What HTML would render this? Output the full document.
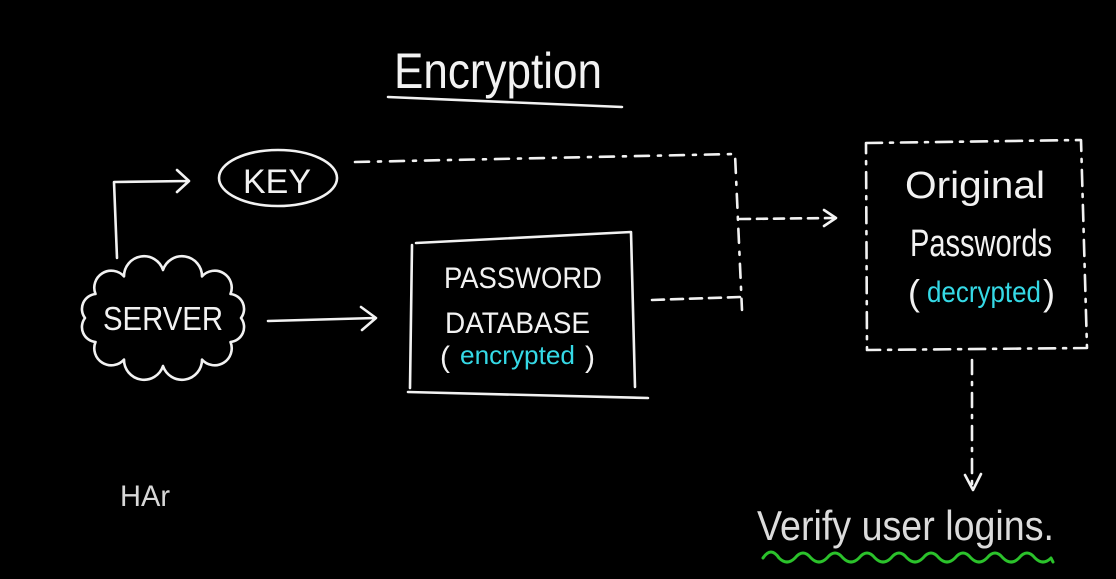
<!DOCTYPE html>
<html><head><meta charset="utf-8"><style>
html,body{margin:0;padding:0;background:#000;width:1116px;height:579px;overflow:hidden}
svg{display:block}
text{font-family:"Liberation Sans",sans-serif;fill:#f2f2f2}
</style></head><body>
<svg width="1116" height="579" viewBox="0 0 1116 579" fill="none" stroke="#f2f2f2" stroke-width="2.6" stroke-linecap="round" stroke-linejoin="round">
<text x="394" y="88" font-size="50" stroke="none" textLength="208" lengthAdjust="spacingAndGlyphs">Encryption</text>
<path d="M388 97 L622 107"/>
<ellipse cx="278" cy="178" rx="59" ry="28"/>
<text x="243" y="193" font-size="34" stroke="none" textLength="68" lengthAdjust="spacingAndGlyphs">KEY</text>
<path d="M117 258 L114 182 L188 181 M177 170 L189 181 L177 192"/>
<path d="M355 162 L735 154 L742 310" stroke-dasharray="14 9 3 9"/>
<path d="M652 300 L740 297" stroke-dasharray="12 7"/>
<path d="M740 219 L834 218" stroke-dasharray="10 7"/>
<path d="M824 210 L836 218 L824 226"/>
<path d="M241 318 A15 15 0 0 1 230.5 342 A17 17 0 0 1 202 359.6 A20 20 0 0 1 163 366 A20 20 0 0 1 124 359.6 A17 17 0 0 1 95.5 342 A15 15 0 0 1 85 318 A15 15 0 0 1 95.5 294 A17 17 0 0 1 124 276.4 A20 20 0 0 1 163 270 A20 20 0 0 1 202 276.4 A17 17 0 0 1 230.5 294 A15 15 0 0 1 241 318 Z"/>
<text x="103" y="330" font-size="33" stroke="none" textLength="120" lengthAdjust="spacingAndGlyphs">SERVER</text>
<path d="M268 321 L375 318 M361 307 L376 318 L362 330"/>
<path d="M410 388 L412 245 M416 243 L631 232 L635 387 M408 392 L648 398"/>
<text x="444" y="288" font-size="30" stroke="none" textLength="158" lengthAdjust="spacingAndGlyphs">PASSWORD</text>
<text x="445" y="333" font-size="30" stroke="none" textLength="145" lengthAdjust="spacingAndGlyphs">DATABASE</text>
<text x="440" y="367" font-size="30" stroke="none">(</text>
<text x="460" y="364" font-size="26" stroke="none" style="fill:#35d9e6" textLength="115" lengthAdjust="spacingAndGlyphs">encrypted</text>
<text x="585" y="367" font-size="30" stroke="none">)</text>
<path d="M866 143 L1081 140 L1087 348 L867 350 Z" stroke-dasharray="16 8 3 8"/>
<text x="905" y="198" font-size="38" stroke="none" textLength="140" lengthAdjust="spacingAndGlyphs">Original</text>
<text x="910" y="256" font-size="38" stroke="none" textLength="142" lengthAdjust="spacingAndGlyphs">Passwords</text>
<text x="908" y="305" font-size="36" stroke="none">(</text>
<text x="927" y="302" font-size="30" stroke="none" style="fill:#35d9e6" textLength="114" lengthAdjust="spacingAndGlyphs">decrypted</text>
<text x="1043" y="305" font-size="36" stroke="none">)</text>
<path d="M972 360 L972 485" stroke-dasharray="14 8 3 8"/>
<path d="M965 475 L973 490 L981 474"/>
<text x="757" y="540" font-size="42" stroke="none" style="fill:#dcdcdc" textLength="297" lengthAdjust="spacingAndGlyphs">Verify user logins.</text>
<path d="M763 558 q8-12 16 0 q8 8 16 0 q8-10 16 0 q8 8 16 0 q8-10 16 0 q8 8 16 0 q8-10 16 0 q8 8 16 0 q8-10 16 0 q8 8 16 0 q8-10 16 0 q8 8 16 0 q8-10 16 0 q8 8 16 0 q8-10 16 0 q8 8 16 0 q8-10 16 0 q8 8 16 0 l2 4" stroke="#2bc22b" stroke-width="3"/>
<text x="120" y="506" font-size="30" stroke="none" style="fill:#d8d8d8" textLength="50" lengthAdjust="spacingAndGlyphs">HAr</text>
</svg>
</body></html>
